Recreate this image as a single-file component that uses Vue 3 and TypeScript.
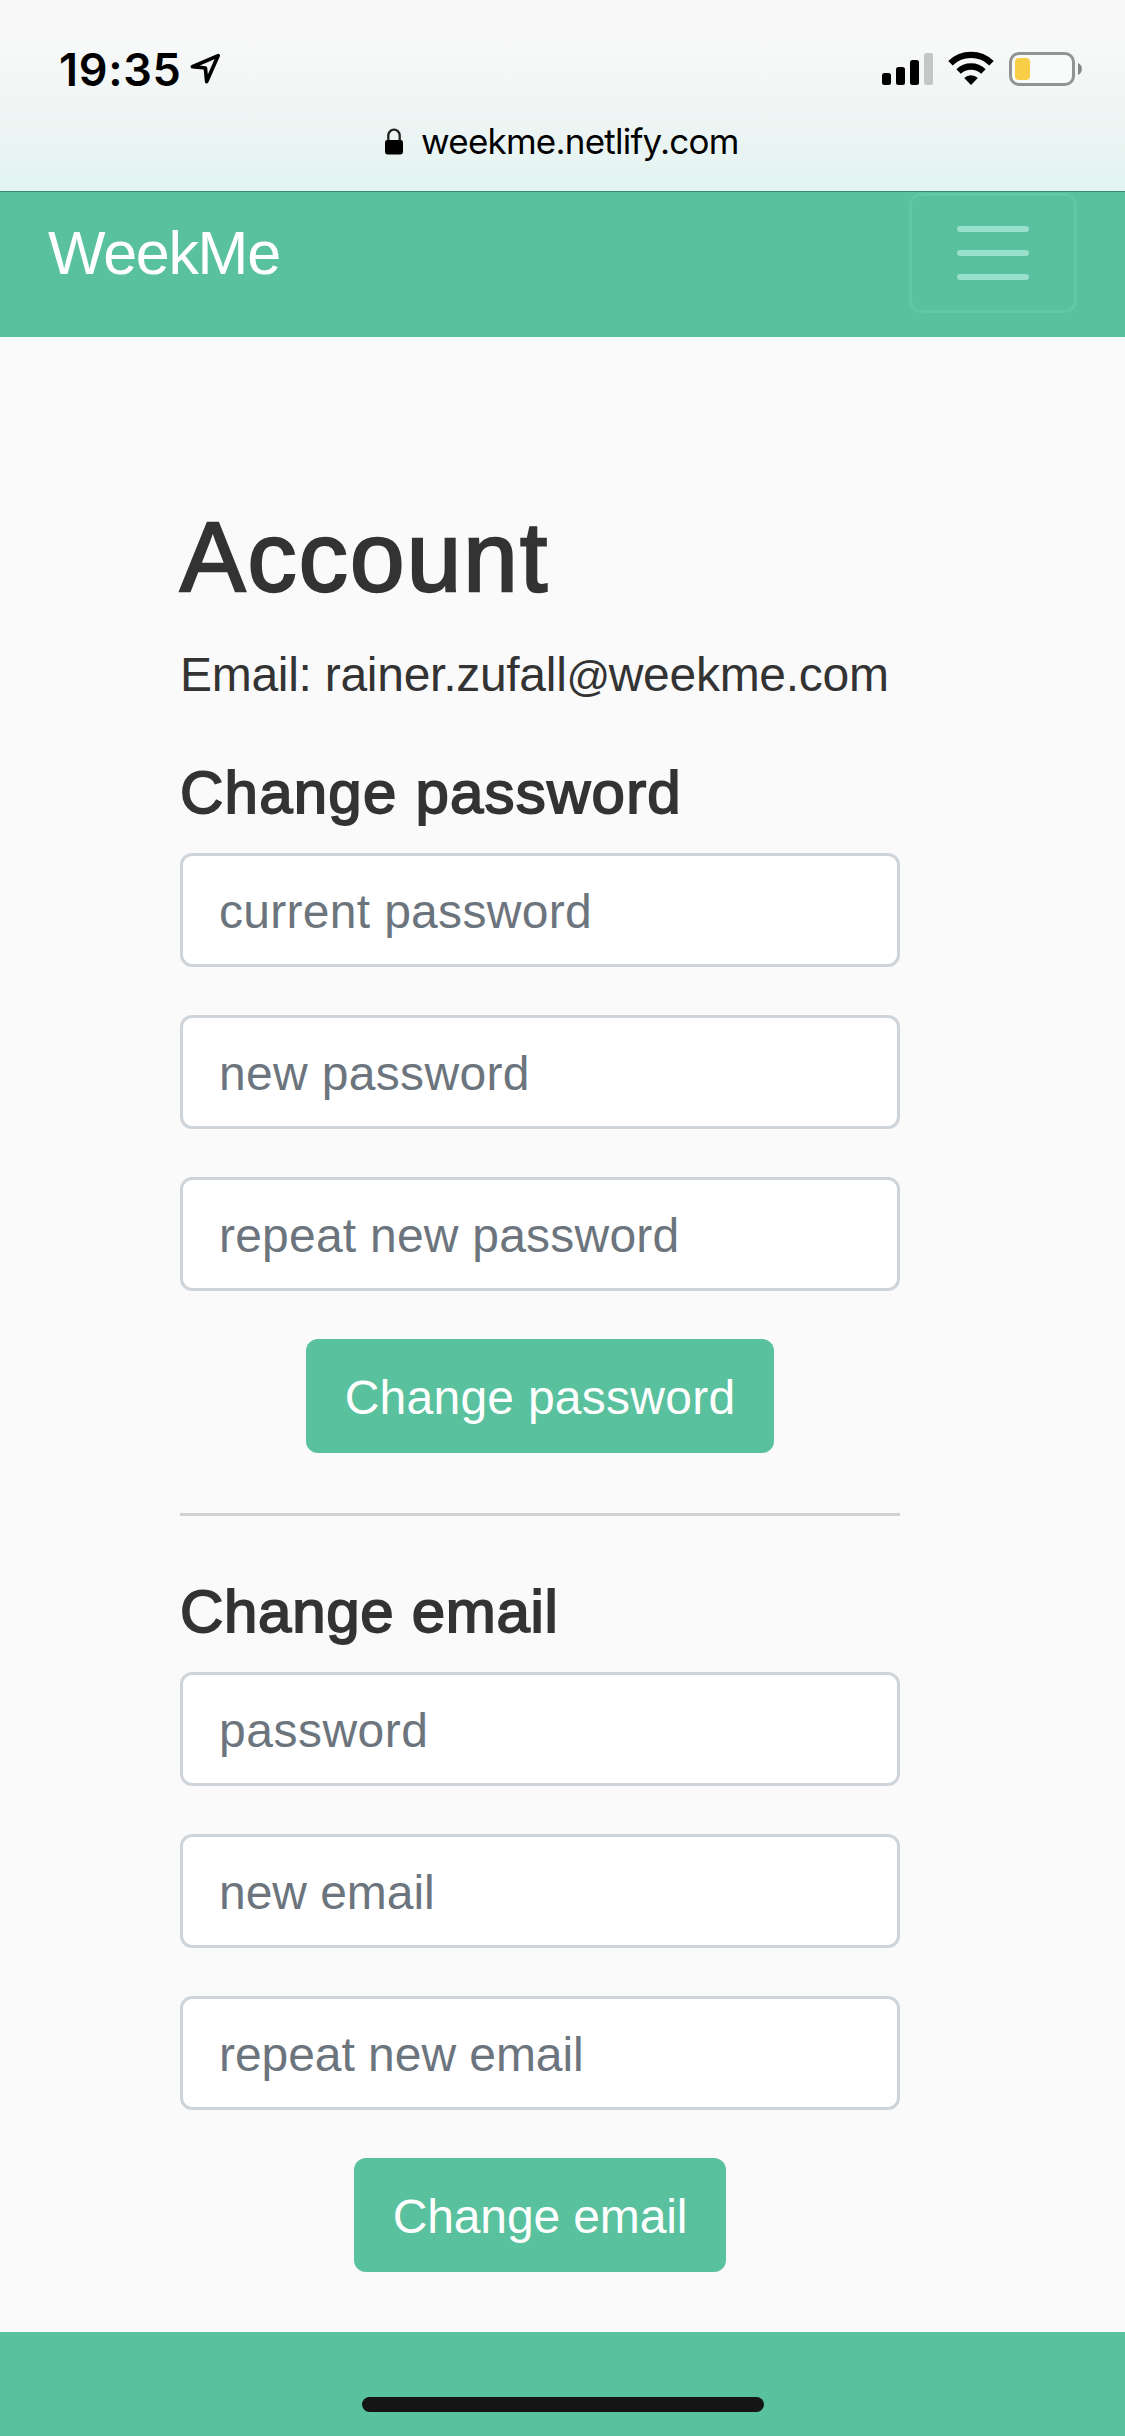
<script setup lang="ts">
interface Field {
  hint: string
  tracking: string
}
interface Section {
  id: string
  title: string
  fields: Field[]
}

const sections: Section[] = [
  {
    id: 'password',
    title: 'Change password',
    fields: [
      { hint: 'current password', tracking: '0.3px' },
      { hint: 'new password', tracking: '0.33px' },
      { hint: 'repeat new password', tracking: '0.22px' },
    ],
  },
  {
    id: 'email',
    title: 'Change email',
    fields: [
      { hint: 'password', tracking: '0.5px' },
      { hint: 'new email', tracking: '-0.05px' },
      { hint: 'repeat new email', tracking: '-0.05px' },
    ],
  },
]
</script>

<template>
  <div class="screen">
    <header class="chrome">
      <div class="status">
        <div class="clock">
          <span class="time">19:35</span>
          <svg class="arrow" width="32" height="32" viewBox="0 0 32 32">
            <path d="M29.2 2.6 L3.4 13.7 L16.4 15 L17.7 28.6 Z" fill="none" stroke="#000" stroke-width="3.7" stroke-linejoin="round" />
          </svg>
        </div>
        <svg class="indicators" width="201" height="36" viewBox="0 0 201 36">
          <rect x="0" y="22" width="9" height="12" rx="2.5" />
          <rect x="14" y="16" width="9" height="18" rx="2.5" />
          <rect x="28" y="9" width="9" height="25" rx="2.5" />
          <rect x="42" y="2" width="9" height="32" rx="2.5" fill="#c5c6c6" />
          <g fill="none" stroke="#000" stroke-width="6.4">
            <path d="M68.5 12.2 A29.5 29.5 0 0 1 109.5 12.2" />
            <path d="M76.6 20.5 A18 18 0 0 1 101.4 20.5" />
          </g>
          <path d="M82.2 27 A9.6 9.6 0 0 1 95.8 27 L89 34 Z" />
          <rect x="128.5" y="2.5" width="63" height="31" rx="8.5" fill="#f9fafa" stroke="#929493" stroke-width="3" />
          <rect x="133" y="7" width="15" height="22" rx="4" fill="#f7ce45" />
          <path d="M196 12 A6.6 6.6 0 0 1 196 24 Z" fill="#858686" />
        </svg>
      </div>
      <div class="address">
        <svg class="lock" width="18" height="27" viewBox="0 0 18 27">
          <path d="M3.3 13.5 V7.5 A5.7 5.9 0 0 1 14.7 7.5 V13.5" fill="none" stroke="#222" stroke-width="2.3" />
          <rect x="0" y="12" width="18" height="14.5" rx="2.4" />
        </svg>
        <span class="host">weekme.netlify.com</span>
      </div>
    </header>

    <nav class="navbar">
      <span class="brand">WeekMe</span>
      <button class="toggler" type="button" aria-label="Toggle navigation">
        <span class="bar"></span>
        <span class="bar"></span>
        <span class="bar"></span>
      </button>
    </nav>

    <main class="content">
      <h1>Account</h1>
      <p class="current">Email: rainer.zufall<span class="at">@</span>weekme.com</p>
      <template v-for="(section, i) in sections" :key="section.id">
        <hr v-if="i > 0" />
        <form class="section" @submit.prevent>
          <h4 :class="section.id">{{ section.title }}</h4>
          <input
            v-for="field in section.fields"
            :key="field.hint"
            class="field"
            :placeholder="field.hint"
            :style="{ letterSpacing: field.tracking }"
          />
          <button class="submit" :class="section.id" type="submit">{{ section.title }}</button>
        </form>
      </template>
    </main>

    <footer class="footer">
      <div class="home"></div>
    </footer>
  </div>
</template>

<style>
body {
  margin: 0;
  background: #fafafa;
}
</style>

<style scoped>
.screen {
  width: 1125px;
  height: 2436px;
  display: flex;
  flex-direction: column;
  overflow: hidden;
  background: #fafafa;
  color: #333;
  font-family: "Liberation Sans", Arial, sans-serif;
  font-size: 48px;
}
.screen * {
  box-sizing: border-box;
}
.chrome {
  flex: none;
  height: 192px;
  border-bottom: 1px solid #3f8770;
  background: linear-gradient(#f9f9f9 0, #f7f8f8 50px, #eff5f4 115px, #e2f4f0 191px);
  color: #000;
  font-family: Inter, sans-serif;
}
.status {
  display: flex;
  justify-content: space-between;
  height: 112px;
  padding: 51px 42px 0 59px;
}
.clock {
  display: flex;
  height: 36px;
}
.time {
  width: 130px;
  font-size: 45px;
  font-weight: 600;
  line-height: 37px;
  letter-spacing: 0.7px;
  white-space: nowrap;
}
.arrow {
  margin-top: 2px;
}
.address {
  display: flex;
  padding: 16px 0 0 385px;
}
.host {
  margin-left: 18px;
  font-size: 35px;
  line-height: 27px;
  letter-spacing: -0.77px;
  white-space: nowrap;
}
.navbar {
  flex: none;
  display: flex;
  justify-content: space-between;
  height: 145px;
  padding: 1px 48px 24px;
  background: #5ac19e;
}
.brand {
  color: #fff;
  font-size: 61px;
  line-height: 120px;
  letter-spacing: -1.3px;
}
.toggler {
  display: flex;
  flex-direction: column;
  align-items: center;
  justify-content: center;
  gap: 18px;
  width: 168px;
  height: 120px;
  padding: 0;
  border: 3px solid #61c7a7;
  border-radius: 12px;
  background: transparent;
}
.bar {
  width: 72px;
  height: 6px;
  border-radius: 3px;
  background: #99e0cd;
}
.content {
  flex: none;
  display: flex;
  flex-direction: column;
  width: 720px;
  height: 1995px;
  margin-left: 180px;
  padding-top: 164px;
}
h1 {
  margin: 0;
  font-size: 98px;
  font-weight: 400;
  line-height: 113px;
  letter-spacing: 2.2px;
  -webkit-text-stroke: 2.4px #333;
}
.current {
  margin: 25px 0 0;
  line-height: 72px;
  letter-spacing: -0.28px;
  white-space: nowrap;
}
.at {
  font-size: 43px;
  line-height: 1;
  letter-spacing: -1.5px;
}
.section {
  display: flex;
  flex-direction: column;
  align-items: center;
  gap: 48px;
}
h4 {
  align-self: stretch;
  margin: 0 0 -24px;
  font-size: 60px;
  font-weight: 400;
  line-height: 72px;
  -webkit-text-stroke: 1.8px #333;
}
h4.password {
  margin-top: 46px;
  letter-spacing: 1.22px;
}
h4.email {
  letter-spacing: 0.7px;
}
.field {
  width: 720px;
  height: 114px;
  padding: 3px 36px 0;
  border: 3px solid #ced4da;
  border-radius: 12px;
  background: #fff;
  font: inherit;
  outline: none;
}
.field::placeholder {
  color: #6c757d;
  opacity: 1;
}
.submit {
  width: 468px;
  height: 114px;
  padding: 2px 0 0;
  border: 0;
  border-radius: 12px;
  background: #5ac19e;
  color: #fff;
  font: inherit;
  letter-spacing: 0.25px;
}
.submit.email {
  width: 372px;
  letter-spacing: -0.12px;
}
hr {
  flex: none;
  width: 720px;
  height: 3px;
  margin: 60px 0;
  border: 0;
  background: #d1d1d1;
}
.footer {
  flex: none;
  height: 104px;
  padding: 65px 0 0 362px;
  background: #5ac19e;
}
.home {
  width: 402px;
  height: 15px;
  border-radius: 8px;
  background: #151515;
}
</style>
